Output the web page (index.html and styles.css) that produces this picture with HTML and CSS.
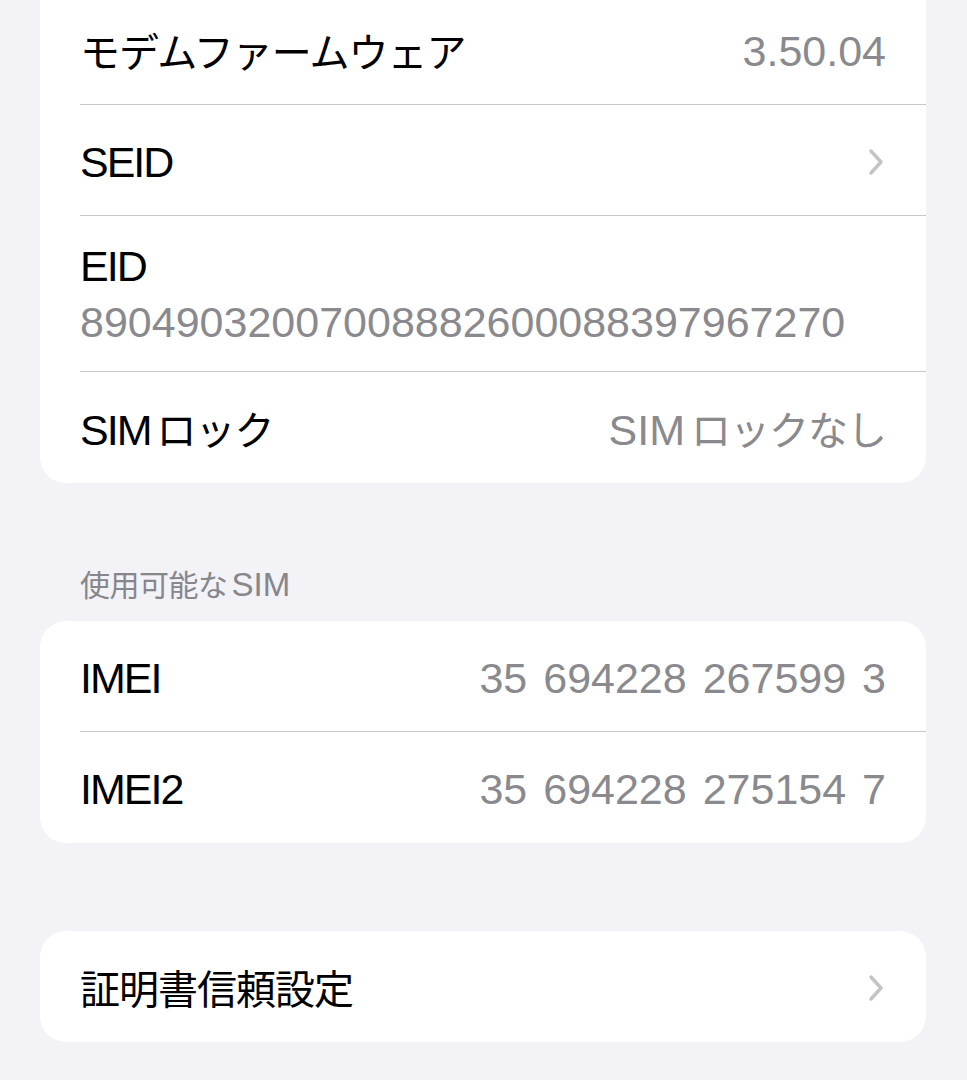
FILE: index.html
```html
<!DOCTYPE html>
<html lang="ja">
<head>
  <meta charset="UTF-8">
  <meta name="viewport" content="width=device-width, initial-scale=1.0">
  <title>情報</title>
  <link rel="stylesheet" href="styles.css">
</head>
<body>
  <main class="settings">
    <!-- 端末情報（上にスクロールした続き） -->
    <section class="group group-continued">
      <div class="row">
        <div class="row-body">
          <span class="label"><span class="ja">モデムファームウェア</span></span>
          <span class="value">3.50.04</span>
        </div>
      </div>
      <div class="row">
        <div class="row-body">
          <span class="label">SEID</span>
          <svg class="chevron" viewBox="0 0 16 28"><path d="M3 3l10 11L3 25"/></svg>
        </div>
      </div>
      <div class="row">
        <div class="row-body stacked">
          <span class="label">EID</span>
          <span class="value">89049032007008882600088397967270</span>
        </div>
      </div>
      <div class="row">
        <div class="row-body">
          <span class="label">SIM<span class="ja gap">ロック</span></span>
          <span class="value">SIM<span class="ja gap">ロックなし</span></span>
        </div>
      </div>
    </section>

    <!-- 使用可能なSIM -->
    <h3 class="section-title"><span class="ja">使用可能な</span>SIM</h3>
    <section class="group">
      <div class="row">
        <div class="row-body">
          <span class="label">IMEI</span>
          <span class="value imei">35 694228 267599 3</span>
        </div>
      </div>
      <div class="row">
        <div class="row-body">
          <span class="label">IMEI2</span>
          <span class="value imei">35 694228 275154 7</span>
        </div>
      </div>
    </section>

    <section class="group group-spaced">
      <div class="row">
        <div class="row-body">
          <span class="label"><span class="ja">証明書信頼設定</span></span>
          <svg class="chevron" viewBox="0 0 16 28"><path d="M3 3l10 11L3 25"/></svg>
        </div>
      </div>
    </section>
  </main>
</body>
</html>
```

FILE: styles.css
```css
:root {
  --bg-color: #f2f2f7;
  --card-bg: #fff;
  --label-color: #000;
  --secondary-color: #8a8a8e;
  --header-color: #86868b;
  --separator: #c8c7cc;
  --chevron-color: #c4c4c7;
}
* {
  box-sizing: border-box;
}
body {
  margin: 0;
  background: var(--bg-color);
  color: var(--label-color);
  font-family: "Liberation Sans", "Noto Sans CJK JP", sans-serif;
}
.settings {
  padding: 0 41px 0 40px;
}
.group {
  background: var(--card-bg);
  border-radius: 26px;
  overflow: hidden;
}
/* the first card starts above the top of the screen */
.group-continued {
  margin-top: -6px;
  border-top-left-radius: 0;
  border-top-right-radius: 0;
}
.group-spaced {
  margin-top: 88px;
}
.row {
  padding-left: 40px;
}
.row-body {
  display: flex;
  align-items: center;
  justify-content: space-between;
  min-height: 111px;
  padding: 3px 40px 0 0;
  border-bottom: 1px solid var(--separator);
  font-size: 43px;
  line-height: 56px;
}
.row:last-child .row-body {
  border-bottom: none;
}
.row-body.stacked {
  flex-direction: column;
  align-items: flex-start;
  justify-content: flex-start;
  min-height: 156px;
  padding-top: 22px;
  padding-bottom: 21px;
}
.label {
  letter-spacing: -2px;
  white-space: nowrap;
}
.value {
  color: var(--secondary-color);
  white-space: nowrap;
}
.imei {
  word-spacing: 4px;
}
.ja {
  font-family: "Noto Sans CJK JP", sans-serif;
  font-size: 40px;
  letter-spacing: -1px;
}
.gap {
  margin-left: 6px;
}
.chevron {
  width: 16px;
  height: 28px;
  margin-right: 2px;
  fill: none;
  stroke: var(--chevron-color);
  stroke-width: 3.5;
  stroke-linecap: round;
  stroke-linejoin: round;
}
.section-title {
  margin: 80px 0 16px;
  padding-left: 40px;
  font-size: 33px;
  line-height: 40px;
  font-weight: normal;
  color: var(--header-color);
}
.section-title .ja {
  font-size: 30px;
  letter-spacing: -0.5px;
  margin-right: 4px;
}
```
